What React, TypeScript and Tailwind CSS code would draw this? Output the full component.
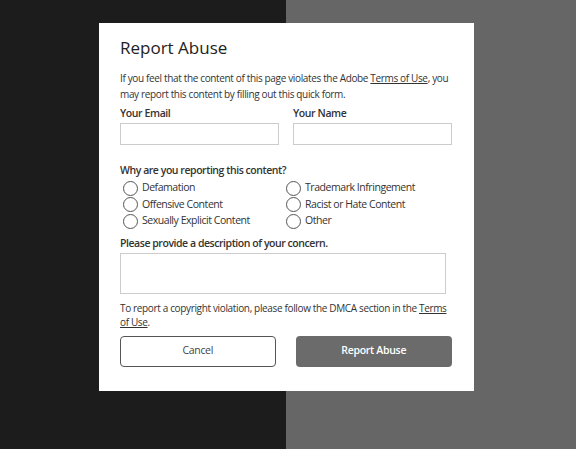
import React from "react";

const reasons: string[][] = [
  ["Defamation", "Trademark Infringement"],
  ["Offensive Content", "Racist or Hate Content"],
  ["Sexually Explicit Content", "Other"],
];

const Radio: React.FC<{ label: string }> = ({ label }) => (
  <label className="flex items-center h-[16.5px]">
    <span className="w-[15px] h-[15px] rounded-full border border-[#555] bg-white mr-[4px] ml-[3px] shrink-0" />
    <span className="text-[10.5px] text-[#333] tracking-[-0.45px]">{label}</span>
  </label>
);

const App: React.FC = () => {
  return (
    <div
      className="relative w-[576px] h-[449px] flex"
      style={{ fontFamily: "'Open Sans', 'Noto Sans', sans-serif" }}
    >
      <div className="w-[286px] h-full bg-[#1c1c1c]" />
      <div className="flex-1 h-full bg-[#666666]" />

      <div className="absolute left-[99px] top-[23px] w-[375px] h-[368px] bg-white pl-[21px] pr-[22px] pt-[12px]">
        <h1 className="text-[17px] text-[#222] leading-[26px]">Report Abuse</h1>

        <p className="mt-[9px] text-[10px] leading-[16px] text-[#333] tracking-[-0.35px]">
          If you feel that the content of this page violates the Adobe{" "}
          <a className="underline">Terms of Use</a>, you may report this content by filling out this quick form.
        </p>

        <div className="mt-[3px] flex gap-[14px]">
          <div className="flex flex-col w-[159px]">
            <label className="text-[10.5px] font-semibold text-[#333] leading-[16px] tracking-[-0.4px]">Your Email</label>
            <input className="mt-[2px] h-[22px] border border-[#ccc] outline-none" />
          </div>
          <div className="flex flex-col w-[159px]">
            <label className="text-[10.5px] font-semibold text-[#333] leading-[16px] tracking-[-0.4px]">Your Name</label>
            <input className="mt-[2px] h-[22px] border border-[#ccc] outline-none" />
          </div>
        </div>

        <div className="mt-[17px] text-[10.5px] font-semibold text-[#333] leading-[16px] tracking-[-0.45px]">
          Why are you reporting this content?
        </div>
        <div className="mt-[2px] flex flex-col">
          {reasons.map((row, i) => (
            <div key={i} className="flex">
              <div className="w-[163px]">
                <Radio label={row[0]} />
              </div>
              <Radio label={row[1]} />
            </div>
          ))}
        </div>

        <div className="mt-[5px] text-[10.5px] font-semibold text-[#333] leading-[16px] tracking-[-0.45px]">
          Please provide a description of your concern.
        </div>
        <textarea className="block mt-[2px] w-[326px] h-[41px] border border-[#ccc] outline-none resize-none" />

        <p className="mt-[7px] text-[10px] leading-[14px] text-[#333] tracking-[-0.35px]">
          To report a copyright violation, please follow the DMCA section in the{" "}
          <a className="underline">Terms of Use</a>.
        </p>

        <div className="mt-[7px] flex gap-[20px]">
          <button className="w-[156px] h-[31px] border border-[#555] rounded-[4px] text-[10.5px] text-[#444] bg-white tracking-[-0.3px]">
            Cancel
          </button>
          <button className="w-[157px] h-[31px] rounded-[4px] bg-[#6b6b6b] text-[10.5px] font-semibold text-white tracking-[-0.3px]">
            Report Abuse
          </button>
        </div>
      </div>
    </div>
  );
};

export default App;
